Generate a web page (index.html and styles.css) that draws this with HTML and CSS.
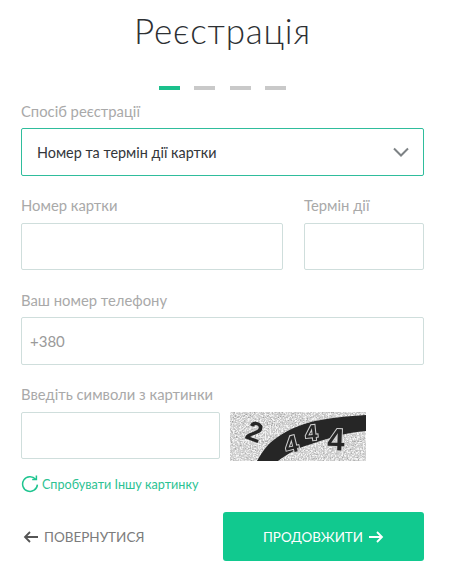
FILE: index.html
```html
<!DOCTYPE html>
<html lang="uk">
<head>
    <meta charset="UTF-8">
    <meta name="viewport" content="width=device-width, initial-scale=1.0">
    <title>Реєстрація</title>
    <link rel="stylesheet" href="styles.css">
</head>
<body>
    <div class="register">
        <h1 class="title">Реєстрація</h1>
        <div class="steps">
            <span class="step active"></span>
            <span class="step"></span>
            <span class="step"></span>
            <span class="step"></span>
        </div>

        <div class="label label-first">Спосіб реєстрації</div>
        <div class="select">
            <span>Номер та термін дії картки</span>
            <svg class="chevron" width="16" height="10" viewBox="0 0 16 10"><path d="M1 1.5l7 7 7-7" fill="none" stroke="#7d8285" stroke-width="2"/></svg>
        </div>

        <div class="card-row">
            <div class="card-number">
                <div class="label">Номер картки</div>
                <div class="input"></div>
            </div>
            <div class="card-term">
                <div class="label">Термін дії</div>
                <div class="input"></div>
            </div>
        </div>

        <div class="label label-phone">Ваш номер телефону</div>
        <div class="input phone">+380</div>

        <div class="label label-captcha">Введіть символи з картинки</div>
        <div class="captcha-row">
            <div class="input captcha-input"></div>
            <svg class="captcha" width="136" height="49" viewBox="0 0 136 49">
                <defs>
                    <filter id="noise" x="0" y="0" width="100%" height="100%">
                        <feTurbulence type="fractalNoise" baseFrequency="0.75" numOctaves="2" seed="4"/>
                        <feColorMatrix type="matrix" values="0 0 0 0 0.2  0 0 0 0 0.2  0 0 0 0 0.2  4 0 0 0 -2.2"/>
                    </filter>
                    <filter id="specks" x="0" y="0" width="100%" height="100%">
                        <feTurbulence type="fractalNoise" baseFrequency="0.6" numOctaves="2" seed="11"/>
                        <feColorMatrix type="matrix" values="0 0 0 0 1  0 0 0 0 1  0 0 0 0 1  5 0 0 0 -2.2"/>
                    </filter>
                    <filter id="soft" x="0" y="0" width="100%" height="100%">
                        <feGaussianBlur stdDeviation="0.55"/>
                    </filter>
                </defs>
                <rect width="136" height="49" fill="#cdcdcd"/>
                <rect width="136" height="49" filter="url(#specks)" opacity="0.8"/>
                <rect width="136" height="49" filter="url(#noise)" opacity="0.6"/>
                <g filter="url(#soft)">
                    <path d="M27 49C33 38 39 31 45 27C58 17 72 12 85 9C100 6 118 4 136 3V19C118 20 96 27 75 34C64 38 56 43 48 49Z" fill="#262626"/>
                    <text class="captcha-two" transform="translate(14 26) rotate(20)">2</text>
                    <text class="captcha-four" font-size="24" transform="translate(57 42) rotate(-14)">4</text>
                    <text class="captcha-four" font-size="22" transform="translate(76 29) rotate(-6)">4</text>
                    <text class="captcha-four" font-size="31" transform="translate(97 38) rotate(2)">4</text>
                </g>
            </svg>
        </div>

        <div class="retry">
            <svg width="18" height="18" viewBox="0 0 18 18"><path d="M14.6 4.2A7.4 7.4 0 1 0 16.4 9.6" fill="none" stroke="#1fc590" stroke-width="1.5"/><path d="M11.2 4.6h4.2V.6" fill="none" stroke="#1fc590" stroke-width="1.5"/></svg>
            <span>Спробувати Іншу картинку</span>
        </div>

        <div class="actions">
            <div class="back">
                <svg width="15" height="12" viewBox="0 0 15 12"><path d="M15 6H2M7 1L2 6l5 5" fill="none" stroke="#555" stroke-width="1.8"/></svg>
                <span>ПОВЕРНУТИСЯ</span>
            </div>
            <button class="next">ПРОДОВЖИТИ
                <svg width="15" height="12" viewBox="0 0 15 12"><path d="M0 6h13M8 1l5 5-5 5" fill="none" stroke="#fff" stroke-width="1.8"/></svg>
            </button>
        </div>
    </div>
</body>
</html>
```

FILE: styles.css
```css
* {
    box-sizing: border-box;
}
body {
    margin: 0;
    background-color: #fff;
    font-family: "Lato", "Open Sans", sans-serif;
}
.register {
    width: 450px;
    padding: 0 26px 0 21px;
}
.title {
    margin: 0;
    padding-top: 9px;
    height: 86px;
    text-align: center;
    font-weight: 300;
    font-size: 35px;
    line-height: 42px;
    letter-spacing: 0.8px;
    color: #2d3033;
}
.steps {
    display: flex;
    justify-content: center;
    gap: 14.33px;
    height: 4px;
}
.step {
    width: 21px;
    height: 4px;
    background-color: #c9c9c9;
}
.step.active {
    background-color: #1bc08c;
}
.label {
    font-size: 14.8px;
    line-height: 18px;
    color: #a9a9a9;
}
.label-first {
    margin-top: 12px;
    margin-bottom: 8px;
}
.select {
    display: flex;
    justify-content: space-between;
    align-items: center;
    height: 48px;
    padding: 0 14px 0 15px;
    border: 1px solid #2fbd9c;
    border-radius: 2px;
    font-size: 14.4px;
    color: #33363a;
}
.card-row {
    display: flex;
    justify-content: space-between;
    margin-top: 20px;
}
.card-number {
    width: 262px;
}
.card-term {
    width: 120px;
}
.card-row .label {
    margin-bottom: 9px;
}
.input {
    height: 47px;
    border: 1px solid #cfdedc;
    border-radius: 2px;
}
.label-phone {
    margin-top: 21px;
    margin-bottom: 8px;
}
.phone {
    display: flex;
    align-items: center;
    height: 48px;
    padding-left: 8px;
    font-size: 15px;
    color: #9a9a9a;
}
.label-captcha {
    margin-top: 20px;
    margin-bottom: 9px;
}
.captcha-row {
    display: flex;
    gap: 10px;
}
.captcha-input {
    width: 199px;
}
.captcha-two, .captcha-four {
    font-family: "Liberation Sans", sans-serif;
    font-weight: 700;
}
.captcha-two {
    font-size: 28px;
    fill: #262626;
}
.captcha-four {
    fill: #262626;
    stroke: #cfcfcf;
    stroke-width: 2px;
    paint-order: stroke;
}
.retry {
    display: flex;
    align-items: center;
    gap: 3px;
    margin-top: 14px;
    font-size: 12.6px;
    color: #2cc293;
}
.actions {
    display: flex;
    justify-content: space-between;
    align-items: center;
    margin-top: 19px;
}
.back {
    display: flex;
    align-items: center;
    gap: 6px;
    padding-left: 2px;
    font-size: 13.5px;
    color: #7c7c7c;
}
.next {
    display: flex;
    justify-content: center;
    align-items: center;
    gap: 6px;
    width: 201px;
    height: 49px;
    border: none;
    border-radius: 3px;
    background-color: #11c98f;
    color: #fff;
    font-family: inherit;
    font-size: 13.4px;
}
```
